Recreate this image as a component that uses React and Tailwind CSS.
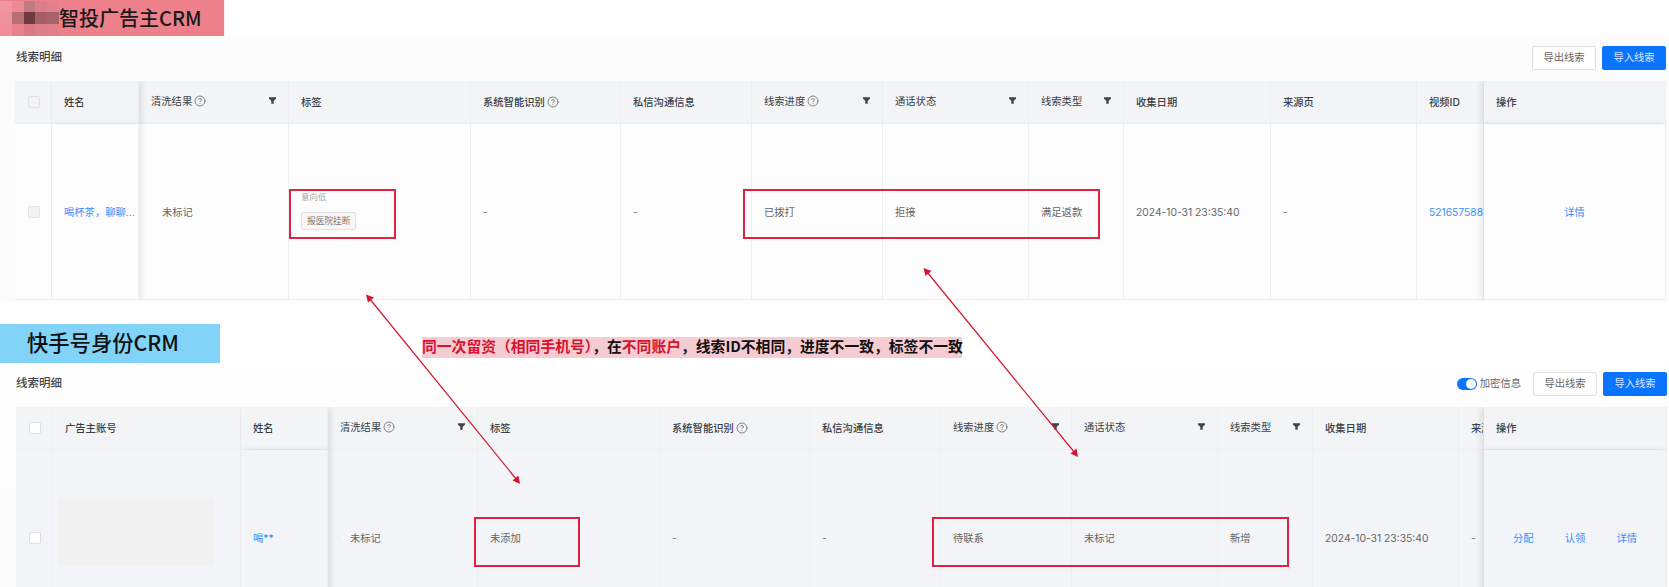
import { CircleHelp } from "lucide-react";

const cjk = "font-['Inter','Noto_Sans_CJK_SC',sans-serif]";

const mosaic = [
  "#f1959f", "#ec8a95", "#c27a83", "#dc7f8a", "#e0818c",
  "#ef929c", "#b96f78", "#6f3a42", "#a55f69", "#a8626c",
  "#f08e99", "#e9808c", "#d97a86", "#de7e89", "#e37f8b",
];

const topCols = [
  { key: "check", width: 37 },
  { key: "name", label: "姓名", width: 87, fixed: "left" },
  { key: "clean", label: "清洗结果", width: 150, help: true, filter: true },
  { key: "tag", label: "标签", width: 182 },
  { key: "ai", label: "系统智能识别", width: 150, help: true },
  { key: "msg", label: "私信沟通信息", width: 131 },
  { key: "progress", label: "线索进度", width: 131, help: true, filter: true },
  { key: "call", label: "通话状态", width: 146, filter: true },
  { key: "type", label: "线索类型", width: 95, filter: true },
  { key: "date", label: "收集日期", width: 147 },
  { key: "source", label: "来源页", width: 146 },
  { key: "video", label: "视频ID", width: 67 },
  { key: "action", label: "操作", width: 182, fixed: "right" },
];

const bottomCols = [
  { key: "check", width: 37 },
  { key: "account", label: "广告主账号", width: 188 },
  { key: "name", label: "姓名", width: 87, fixed: "left" },
  { key: "clean", label: "清洗结果", width: 150, help: true, filter: true },
  { key: "tag", label: "标签", width: 182 },
  { key: "ai", label: "系统智能识别", width: 150, help: true },
  { key: "msg", label: "私信沟通信息", width: 131 },
  { key: "progress", label: "线索进度", width: 131, help: true, filter: true },
  { key: "call", label: "通话状态", width: 146, filter: true },
  { key: "type", label: "线索类型", width: 95, filter: true },
  { key: "date", label: "收集日期", width: 146 },
  { key: "source", label: "来源页", width: 25 },
  { key: "action", label: "操作", width: 183, fixed: "right" },
];

function Funnel() {
  return (
    <svg viewBox="0 0 10 10" className="w-[7px] h-[7px] shrink-0 fill-[#3d4450]">
      <path d="M0 0.5h10v2L6.700 5.200V9.800H3.300V5.200L0 2.500z" />
    </svg>
  );
}

function Checkbox({ disabled }) {
  return (
    <span className={`block ml-px w-[12px] h-[12px] rounded-[2px] border ${disabled ? "border-[#e2e3e6] bg-[#f3f3f4]" : "border-[#dcdde0] bg-white"}`} />
  );
}

function Link({ children }) {
  return <span className="text-[#3a8dff]">{children}</span>;
}

function Dash() {
  return <span className="text-[#777]">-</span>;
}

function fixedClass(col) {
  if (col.fixed === "left") return "relative z-10 shadow-[3px_0_6px_rgba(0,0,0,0.09)]";
  if (col.fixed === "right") return "relative z-10 shadow-[-3px_0_6px_rgba(0,0,0,0.09)]";
  return "";
}

function LeadTable({ cols, cells, bodyBg, disabledCheck }) {
  return (
    <table className="w-[1651px] table-fixed border-separate border-spacing-0 text-[10.300px] leading-[14px] text-[#666]">
      <colgroup>
        {cols.map((col) => (
          <col key={col.key} style={{ width: col.width }} />
        ))}
      </colgroup>
      <thead>
        <tr className="h-[43px]">
          {cols.map((col) => (
            <th
              key={col.key}
              className={`bg-[#f3f4f6] border-b border-r border-[#eceef1] px-[12px] text-left font-medium text-[#3a3f47] overflow-hidden whitespace-nowrap ${fixedClass(col)}`}
            >
              {col.key === "check" ? (
                <Checkbox disabled={disabledCheck} />
              ) : (
                <div className={`flex items-center justify-between ${col.filter ? "pb-[3px] font-normal" : ""}`}>
                  <span className="flex items-center gap-[2px]">
                    {col.label}
                    {col.help && <CircleHelp size={12} strokeWidth={1.4} className="text-[#555]" />}
                  </span>
                  {col.filter && <Funnel />}
                </div>
              )}
            </th>
          ))}
        </tr>
      </thead>
      <tbody>
        <tr className="h-[176px]">
          {cols.map((col) => (
            <td
              key={col.key}
              className={`${bodyBg} border-b border-r border-[#eeeff2] px-[12px] overflow-hidden whitespace-nowrap ${fixedClass(col)}`}
            >
              {col.key === "check" ? <Checkbox disabled={disabledCheck} /> : cells[col.key]}
            </td>
          ))}
        </tr>
      </tbody>
    </table>
  );
}

function Buttons() {
  return (
    <div className="flex gap-[6px] text-[10.300px]">
      <button className="w-[64px] h-[24px] rounded-[2px] border border-[#dedfe2] bg-white text-[#666]">导出线索</button>
      <button className="w-[64px] h-[24px] rounded-[2px] bg-[#0a74ff] text-[#d8e8ff]">导入线索</button>
    </div>
  );
}

const topCells = {
  name: <Link>喝杯茶，聊聊...</Link>,
  clean: <span className="pl-[11px]">未标记</span>,
  tag: (
    <div className="flex flex-col items-start mb-[3px]">
      <span className="text-[8.500px] leading-[12px] text-[#aaa]">意向低</span>
      <span className="mt-[9px] h-[18px] px-[5px] rounded-[2px] border border-[#e0e0e2] bg-[#f7f7f8] text-[8.700px] leading-[16px] text-[#777]">报医院挂断</span>
    </div>
  ),
  ai: <Dash />,
  msg: <Dash />,
  progress: "已拨打",
  call: "拒接",
  type: "满足返款",
  date: "2024-10-31 23:35:40",
  source: <Dash />,
  video: <Link>521657588</Link>,
  action: <div className="text-center"><Link>详情</Link></div>,
};

const bottomCells = {
  account: <div className="-ml-[7px] mb-[10px] w-[156px] h-[67px] bg-[#f1f1f2]" />,
  name: <Link>喝**</Link>,
  clean: (
    <span className="flex items-center gap-[6px] pl-[2px]">
      <span className="w-[2px] h-[2px] rounded-full bg-white" />
      未标记
    </span>
  ),
  tag: "未添加",
  ai: <Dash />,
  msg: <Dash />,
  progress: "待联系",
  call: "未标记",
  type: "新增",
  date: "2024-10-31 23:35:40",
  source: <Dash />,
  action: (
    <div className="flex justify-between px-[17px]">
      <Link>分配</Link>
      <Link>认领</Link>
      <Link>详情</Link>
    </div>
  ),
};

function Overlays() {
  return (
    <>
      <div className="absolute z-20 left-[289px] top-[189px] w-[107px] h-[50px] border-2 border-[#dc2440]" />
      <div className="absolute z-20 left-[743px] top-[189px] w-[357px] h-[50px] border-2 border-[#dc2440]" />
      <div className="absolute z-20 left-[474px] top-[517px] w-[106px] h-[50px] border-2 border-[#dc2440]" />
      <div className="absolute z-20 left-[932px] top-[517px] w-[357px] h-[50px] border-2 border-[#dc2440]" />
      <svg className="absolute inset-0 z-20 pointer-events-none" width="1669" height="587" viewBox="0 0 1669 587">
        <g stroke="#d5162f" strokeWidth="1.200">
          <line x1="369" y1="298" x2="517" y2="480" />
          <line x1="927" y1="272" x2="1075" y2="453" />
        </g>
        <g fill="#d5162f">
          <path d="M366 294.500l8 3-6 5z" />
          <path d="M520 484l-1.500-8.500-6 5z" />
          <path d="M923.500 268l8 3-6 5z" />
          <path d="M1078 457l-1.500-8.500-6 5z" />
        </g>
      </svg>
    </>
  );
}

export default function App() {
  return (
    <div className={`relative w-[1669px] h-[587px] overflow-hidden bg-white ${cjk}`}>
      <div className="flex items-center w-[224px] h-[36px] bg-[#ee808c] text-[20px] font-medium text-[#1a1a1a] shadow-[0_1px_1px_rgba(200,90,100,0.5)]">
        <div className="grid grid-cols-5 grid-rows-3 w-[59px] h-[35px] shrink-0">
          {mosaic.map((color, i) => (
            <span key={i} style={{ backgroundColor: color }} />
          ))}
        </div>
        <span className="pb-[1px] font-['Noto_Sans_CJK_SC',sans-serif]">智投广告主CRM</span>
      </div>

      <div className="h-[267px] bg-[#fcfcfd]">
        <div className="flex items-center justify-between h-[45px] pb-[2px] pl-[16px] pr-[3px]">
          <span className="text-[11.500px] font-medium text-[#444]">线索明细</span>
          <Buttons />
        </div>
        <div className="pl-[15px] w-[1666px] h-[219px] overflow-hidden">
          <LeadTable cols={topCols} cells={topCells} bodyBg="bg-[#fdfdfe]" disabledCheck />
        </div>
      </div>

      <div className="relative z-10 flex mt-[21px] h-[39px]">
        <div className="flex items-center w-[220px] bg-[#81d3f8] pl-[27px] pb-[3px] text-[21.300px] font-medium text-[#111] font-['Noto_Sans_CJK_SC',sans-serif]">
          快手号身份CRM
        </div>
        <div className="self-start ml-[202px] mt-[13px] h-[21px] w-[540px] whitespace-nowrap bg-[#f6ccd3] text-[14.800px] leading-[18px] font-bold text-[#111] font-['Noto_Sans_CJK_SC',sans-serif]">
          <span className="text-[#d9122e]">同一次留资（相同手机号）</span>，在<span className="text-[#d9122e]">不同账户</span>，线索ID不相同，进度不一致，标签不一致
        </div>
      </div>

      <div className="-mt-[5px] bg-gradient-to-b from-[#fefefe] to-[#fbfbfc]">
        <div className="flex items-center justify-between h-[49px] pt-[3px] pl-[16px] pr-[2px]">
          <span className="text-[11.500px] font-medium text-[#444]">线索明细</span>
          <div className="flex items-center">
            <span className="relative w-[20px] h-[12px] rounded-full bg-[#0a74ff]">
              <span className="absolute right-[1px] top-[1px] w-[10px] h-[10px] rounded-full bg-white" />
            </span>
            <span className="ml-[3px] mr-[12px] text-[10.300px] text-[#666]">加密信息</span>
            <Buttons />
          </div>
        </div>
        <div className="pl-[16px] w-[1667px] overflow-hidden">
          <LeadTable cols={bottomCols} cells={bottomCells} bodyBg="bg-[#f3f4f7]" />
        </div>
      </div>

      <Overlays />
    </div>
  );
}
